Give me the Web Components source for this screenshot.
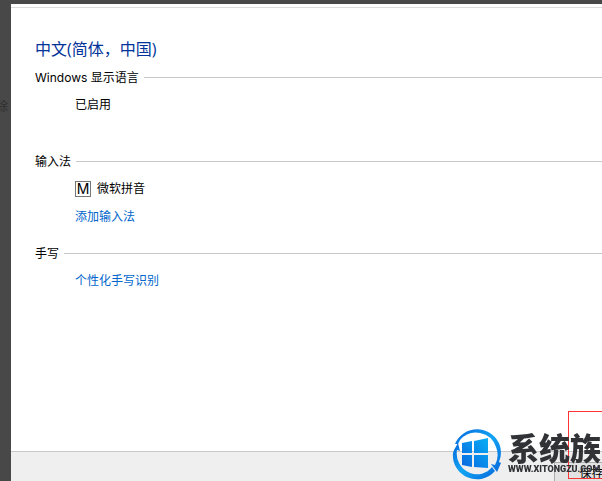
<!DOCTYPE html>
<html lang="zh-CN">
<head>
    <meta charset="UTF-8"/>
    <meta name="viewport" content="width=device-width, initial-scale=1">
    <title>语言选项</title>
    <style>
        body {
            margin: 0;
            font: 12px/16px "Open Sans", "Noto Sans CJK SC", sans-serif;
            color: #000;
            background: #484848;
        }
    </style>
</head>
<body>

<language-window>
    <h1 slot="title">中文(简体，中国)</h1>
    <option-group label="Windows 显示语言" size="large">
        <span>已启用</span>
    </option-group>
    <option-group label="输入法">
        <input-method mark="M">微软拼音</input-method>
        <link-item>添加输入法</link-item>
    </option-group>
    <option-group label="手写">
        <link-item>个性化手写识别</link-item>
    </option-group>
    <save-button slot="actions">保存</save-button>
</language-window>
<site-mark></site-mark>

<script>
    function define(tagName, html, setup) {
        window.customElements.define(tagName, class extends HTMLElement {
            constructor() {
                super();
                const template = document.createElement('template');
                template.innerHTML = html;
                this.attachShadow({ mode: 'open' }).appendChild(template.content.cloneNode(true));
            }

            connectedCallback() {
                if (setup) {
                    setup(this, this.shadowRoot);
                }
            }
        });
    }

    define('language-window', `
        <style>
            :host {
                display: grid;
                grid-template-columns: 11px minmax(0, 1fr);
                box-sizing: border-box;
                height: 100vh;
                padding-top: 4px;
                overflow: hidden;
            }
            .behind {
                display: flex;
                justify-content: flex-end;
                box-sizing: border-box;
                padding: 95px 3px 0 0;
                overflow: hidden;
                color: #2d2d2d;
            }
            .pane {
                display: flex;
                flex-direction: column;
                min-height: 0;
                background: #fff;
                overflow: hidden;
            }
            .strip { height: 3px; flex: none; border-bottom: 1px solid #dcdcdc; }
            main { flex: 1; min-height: 0; padding: 29px 0 0 24px; }
            ::slotted(h1) {
                margin: 0 0 9px;
                font-size: 16px;
                line-height: 24px;
                font-weight: 400;
                color: #003399;
            }
            footer {
                display: flex;
                flex: none;
                justify-content: flex-end;
                height: 19px;
                padding-top: 10px;
                border-top: 1px solid #c8c8c8;
                background: #efefef;
            }
        </style>
        <div class="behind">除</div>
        <div class="pane">
            <div class="strip"></div>
            <main><slot name="title"></slot><slot></slot></main>
            <footer><slot name="actions"></slot></footer>
        </div>
    `);

    define('option-group', `
        <style>
            :host { display: block; margin-bottom: 21px; }
            :host([size="large"]) { margin-bottom: 41px; }
            h2 {
                display: flex;
                align-items: center;
                gap: 5px;
                margin: 0;
                font: 400 12px/16px Inter, "Noto Sans CJK SC", sans-serif;
            }
            h2::after {
                content: "";
                flex: 1;
                height: 1px;
                margin-bottom: 2px;
                background: #c8c8c8;
            }
            .items {
                display: flex;
                flex-direction: column;
                align-items: flex-start;
                gap: 12px;
                padding: 11px 0 0 40px;
            }
        </style>
        <h2></h2>
        <div class="items"><slot></slot></div>
    `, (host, root) => {
        root.querySelector('h2').textContent = host.getAttribute('label');
    });

    define('input-method', `
        <style>
            :host { display: flex; align-items: center; gap: 6px; }
            b {
                box-sizing: border-box;
                width: 16px;
                height: 16px;
                border: 1px solid #777;
                font: 400 14px/14px Inter, sans-serif;
                text-align: center;
            }
        </style>
        <b></b><span><slot></slot></span>
    `, (host, root) => {
        root.querySelector('b').textContent = host.getAttribute('mark');
    });

    define('link-item', `
        <style>
            :host { display: block; }
            a { color: #0066cc; text-decoration: none; }
            a:hover { color: #3399ff; text-decoration: underline; }
        </style>
        <a href="#"><slot></slot></a>
    `);

    define('save-button', `
        <style>
            /* the button runs on past the window edge */
            :host { display: block; margin-right: -27px; }
            button {
                width: 75px;
                height: 23px;
                padding: 0;
                border: 1px solid #acacac;
                background: #e3e3e3;
                font: inherit;
                color: #000;
            }
        </style>
        <button type="button"><slot></slot></button>
    `);

    define('site-mark', `
        <style>
            :host {
                position: fixed;
                right: 0;
                bottom: 0;
                width: 150px;
                height: 70px;
                overflow: hidden;
                pointer-events: none;
            }
            .frame {
                position: absolute;
                right: -40px;
                bottom: 2px;
                box-sizing: border-box;
                width: 74px;
                height: 68px;
                border: 1px solid #f33;
            }
            .brand {
                position: absolute;
                inset: auto 0 0 0;
                display: flex;
                align-items: flex-start;
                gap: 6px;
                height: 54px;
            }
            svg { flex: none; width: 50px; height: 54px; }
            .words { display: flex; flex-direction: column; padding-top: 4px; color: #303236; white-space: nowrap; }
            strong { font: 900 31px/32px "Noto Sans CJK SC", sans-serif; }
            small { font: 900 9px/12px Roboto, sans-serif; }
        </style>
        <div class="frame"></div>
        <div class="brand">
            <svg viewBox="0 0 50 54" aria-hidden="true">
                <defs>
                    <linearGradient id="ring" x1="0" y1="0" x2="1" y2="1">
                        <stop offset="0" stop-color="#0869dc"/>
                        <stop offset=".5" stop-color="#12a4f3"/>
                        <stop offset="1" stop-color="#0869dc"/>
                    </linearGradient>
                    <linearGradient id="pane" x1="0" y1="1" x2="1" y2="0">
                        <stop offset="0" stop-color="#0968df"/>
                        <stop offset="1" stop-color="#08aef5"/>
                    </linearGradient>
                </defs>
                <path d="M3 17A24 24 0 0 1 48 19a24 24 0 0 1-1 16l2 1-4 9-6-8 4 1a21 21 0 0 0 1-18A21 21 0 0 0 8 13l-2 4Z" fill="url(#ring)"/>
                <path d="M6 16 2 23l-1 3a24 24 0 0 0 42 18l-3-4a19 19 0 0 1-22 6A21 21 0 0 1 5 23l3 1Z" fill="url(#ring)"/>
                <path d="m10 16 10-2v12H10Zm12-2 14-3v15H22ZM10 28h10v12l-10-2Zm12 0h14v13l-14-1Z" fill="url(#pane)"/>
            </svg>
            <div class="words">
                <strong>系统族</strong>
                <small>WWW.XITONGZU.COM</small>
            </div>
        </div>
    `);
</script>
</body>
</html>
